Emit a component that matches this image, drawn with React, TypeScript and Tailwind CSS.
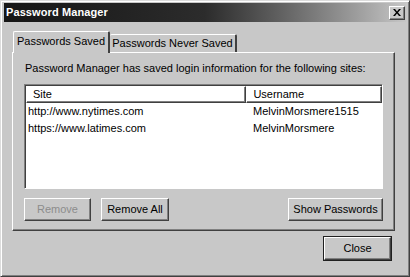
import React from 'react';

// Classic raised / sunken bevels
const raised = 'border border-t-white border-l-white border-r-[#404040] border-b-[#404040] shadow-[inset_-1px_-1px_0_#808080]';

const Button: React.FC<{ label: string; width: string; disabled?: boolean; isDefault?: boolean }> = ({ label, width, disabled, isDefault }) => (
  <button
    className={`${width} h-[23px] text-[11px] bg-[#c8c8c8] ${raised} ${
      isDefault ? 'outline outline-1 outline-[#202020]' : ''
    } ${disabled ? 'text-[#8c8c8c]' : 'text-black'}`}
  >
    {label}
  </button>
);

const sites = [
  { site: 'http://www.nytimes.com', user: 'MelvinMorsmere1515' },
  { site: 'https://www.latimes.com', user: 'MelvinMorsmere' },
];

export default function App() {
  return (
    <div className="w-[410px] h-[277px] bg-[#c8c8c8] font-['Liberation_Sans',Arial,sans-serif] text-[11px] text-black border border-t-[#dcdcdc] border-l-[#dcdcdc] border-r-[#404040] border-b-[#404040] shadow-[inset_1px_1px_0_#fff,inset_-1px_-1px_0_#808080] pt-[2px] px-[3px] flex flex-col">
      {/* Title bar */}
      <div className="h-[19px] bg-linear-to-r from-[#161616] via-[#2c2c2c] to-[#c6c6c6] flex items-center justify-between pl-[2px] pr-[1px]">
        <span className="text-white font-bold text-[11px] tracking-[0.1px]">Password Manager</span>
        <button className={`w-[16px] h-[14px] bg-[#c8c8c8] ${raised} flex items-center justify-center`}>
          <svg width="8" height="7" viewBox="0 0 8 7">
            <path d="M0 0h2l2 2.5L6 0h2L5 3.5 8 7H6L4 4.5 2 7H0l3-3.5z" fill="#000" />
          </svg>
        </button>
      </div>

      {/* Tabs */}
      <div className="mt-[9px] ml-[8px] mr-[11px] flex items-end relative z-10">
        <div className="h-[22px] w-[97px] ml-[1px] -mb-[1px] bg-[#c8c8c8] border-t border-l border-white border-r-2 border-r-[#404040] rounded-t-[2px] flex items-center justify-center pb-[2px]">
          Passwords Saved
        </div>
        <div className="h-[18px] w-[127px] bg-[#c8c8c8] border-t border-white border-r-2 border-r-[#404040] rounded-t-[2px] flex items-center justify-center">
          Passwords Never Saved
        </div>
      </div>

      {/* Panel */}
      <div className="ml-[8px] mr-[11px] h-[179px] border border-t-white border-l-white border-r-[#404040] border-b-[#404040] shadow-[inset_-1px_-1px_0_#808080] px-[11px] flex flex-col">
        <p className="mt-[9px] h-[13px] leading-[13px] pl-[1px]">
          Password Manager has saved login information for the following sites:
        </p>
        <div className="mt-[9px] h-[105px] bg-white border border-t-[#808080] border-l-[#808080] border-r-white border-b-white shadow-[inset_1px_1px_0_#404040]">
          <div className="flex h-[17px] ml-[1px] mt-[1px]">
            <div className={`w-[221px] ${raised} pl-[6px] leading-[14px]`}>Site</div>
            <div className={`w-[136px] ${raised} pl-[6px] leading-[14px]`}>Username</div>
          </div>
          {sites.map((s) => (
            <div key={s.site} className="flex h-[17px] items-center ml-[1px]">
              <div className="w-[221px] pl-[2px]">{s.site}</div>
              <div className="pl-[6px]">{s.user}</div>
            </div>
          ))}
        </div>
        <div className="mt-[9px] flex">
          <Button label="Remove" width="w-[67px]" disabled />
          <Button label="Remove All" width="w-[68px] ml-[10px]" />
          <div className="flex-1" />
          <Button label="Show Passwords" width="w-[95px]" />
        </div>
      </div>

      {/* Footer */}
      <div className="mt-[6px] flex justify-end mr-[15px]">
        <Button label="Close" width="w-[67px]" isDefault />
      </div>
    </div>
  );
}
